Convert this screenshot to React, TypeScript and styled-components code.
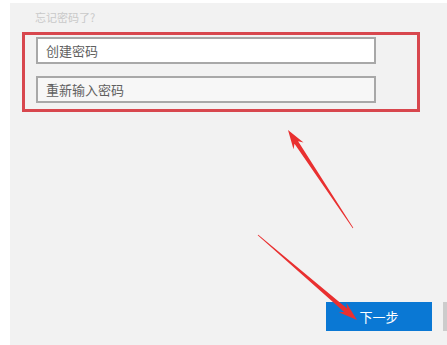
import React from 'react';
import styled, {createGlobalStyle} from 'styled-components';

const GlobalStyle = createGlobalStyle`
  html, body {
    margin: 0;
    padding: 0;
    background: #ffffff;
    overflow: hidden;
  }
  body {
    font-family: "Noto Sans CJK SC", "Noto Sans", sans-serif;
  }
`;

const Page = styled.div`
  position: relative;
  width: 447px;
  height: 345px;
  padding-top: 3px;
  box-sizing: border-box;
`;

const Panel = styled.div`
  margin-left: 10px;
  height: 342px;
  background: #f2f2f2;
  padding-top: 6px;
  box-sizing: border-box;
  overflow: hidden;
  display: flex;
  flex-direction: column;
`;

const Hint = styled.div`
  margin-left: 25px;
  font-size: 11px;
  line-height: 16px;
  color: #c9c9c9;
`;

const Highlight = styled.div`
  margin: 7px 0 0 12px;
  width: 398px;
  border: 3px solid #d8474e;
  box-sizing: border-box;
  padding: 2px 0 6px 11px;
  display: flex;
  flex-direction: column;
  gap: 12px;
`;

const Field = styled.div<{$filled?: boolean}>`
  width: 340px;
  height: 27px;
  box-sizing: border-box;
  border: 2px solid #a8a8a8;
  background: ${(p) => (p.$filled ? '#ffffff' : '#f7f7f7')};
  padding-left: 8px;
  display: flex;
  align-items: center;
  font-size: 13px;
  color: #606060;
`;

const ButtonRow = styled.div`
  margin: 190px 0 0 316px;
  display: flex;
  gap: 11px;
`;

const Button = styled.div<{$primary?: boolean}>`
  flex: none;
  width: 106px;
  height: 29px;
  display: flex;
  align-items: center;
  justify-content: center;
  font-size: 13px;
  color: ${(p) => (p.$primary ? '#ffffff' : '#333333')};
  background: ${(p) => (p.$primary ? '#0a78d4' : '#cccccc')};
`;

const Overlay = styled.svg`
  position: absolute;
  left: 0;
  top: 0;
  pointer-events: none;
`;

type Pt = [number, number];

const arrowPoints = (tail: Pt, tip: Pt) => {
  const dx = tip[0] - tail[0];
  const dy = tip[1] - tail[1];
  const len = Math.hypot(dx, dy);
  const ux = dx / len;
  const uy = dy / len;
  const px = -uy;
  const py = ux;
  const at = (d: number, w: number): string =>
    `${(tip[0] - ux * d + px * w).toFixed(1)},${(tip[1] - uy * d + py * w).toFixed(1)}`;
  return [
    at(len, 0.4),
    at(15, 2.2),
    at(19, 6),
    `${tip[0]},${tip[1]}`,
    at(19, -6),
    at(15, -2.2),
    at(len, -0.4),
  ].join(' ');
};

const arrows: [Pt, Pt][] = [
  [[353, 228], [288, 130]],
  [[258, 235], [357, 320]],
];

export default function App() {
  return (
    <>
      <GlobalStyle />
      <Page>
        <Panel>
          <Hint>忘记密码了?</Hint>
          <Highlight>
            <Field $filled>创建密码</Field>
            <Field>重新输入密码</Field>
          </Highlight>
          <ButtonRow>
            <Button $primary>下一步</Button>
            <Button />
          </ButtonRow>
        </Panel>
        <Overlay width={447} height={345} viewBox="0 0 447 345">
          {arrows.map(([tail, tip], i) => (
            <polygon key={i} points={arrowPoints(tail, tip)} fill="#e93030" />
          ))}
        </Overlay>
      </Page>
    </>
  );
}
